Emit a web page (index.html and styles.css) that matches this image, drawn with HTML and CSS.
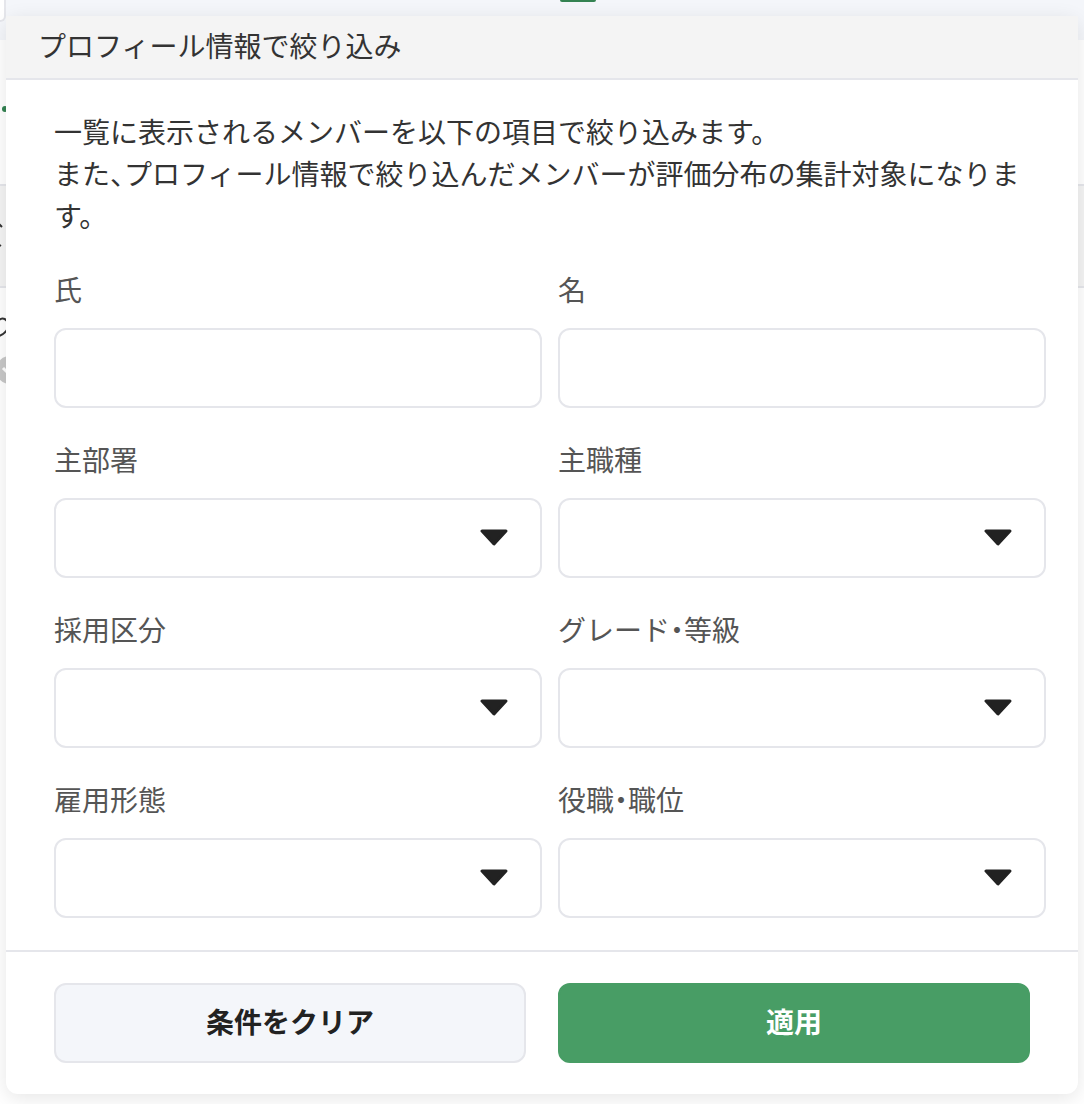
FILE: index.html
```html
<!DOCTYPE html>
<html lang="ja">
<head>
<meta charset="utf-8">
<meta name="viewport" content="width=device-width, initial-scale=1">
<title>プロフィール情報で絞り込み</title>
<link rel="stylesheet" href="styles.css">
</head>
<body>
<div class="stage">
  <div class="page" aria-hidden="true">
    <div class="toolbar"><span class="toolbar-box"></span><span class="toolbar-mark"></span></div>
    <div class="page-summary"><span class="dot"></span></div>
    <div class="page-head"><svg width="6" height="32" viewBox="0 0 6 32"><path d="M-2 3L2 7M-2 24L1 26" fill="none" stroke="#333" stroke-width="2"/></svg></div>
    <div class="page-row">
      <svg width="6" height="24" viewBox="0 0 6 24"><path d="M-1 4C3 1 7 3 8 8C9 13 5 18 -1 20" fill="none" stroke="#333" stroke-width="2"/></svg>
      <svg width="6" height="28" viewBox="0 0 6 28"><circle cx="10" cy="14" r="14" fill="#c8c8c8"/><path d="M3 12L9 18L17 10" fill="none" stroke="#fff" stroke-width="3"/></svg>
    </div>
  </div>

  <form class="dialog" role="dialog" aria-labelledby="dialog-title">
    <h1 class="dialog-title" id="dialog-title">プロフィール情報で絞り込み</h1>
    <div class="dialog-body">
      <p class="lead">一覧に表示されるメンバーを以下の項目で絞り込みます。<br>また、プロフィール情報で絞り込んだメンバーが評価分布の集計対象になります。</p>
      <div class="fields">
        <div class="field"><label for="family">氏</label><input class="control" id="family" type="text"></div>
        <div class="field"><label for="given">名</label><input class="control" id="given" type="text"></div>
        <div class="field"><label for="dept">主部署</label><div class="picker"><select class="control" id="dept"><option></option></select><svg class="arrow" viewBox="0 0 28 18"><path d="M2 2H26L14 15Z"/></svg></div></div>
        <div class="field"><label for="job">主職種</label><div class="picker"><select class="control" id="job"><option></option></select><svg class="arrow" viewBox="0 0 28 18"><path d="M2 2H26L14 15Z"/></svg></div></div>
        <div class="field"><label for="hiring">採用区分</label><div class="picker"><select class="control" id="hiring"><option></option></select><svg class="arrow" viewBox="0 0 28 18"><path d="M2 2H26L14 15Z"/></svg></div></div>
        <div class="field"><label for="grade">グレード・等級</label><div class="picker"><select class="control" id="grade"><option></option></select><svg class="arrow" viewBox="0 0 28 18"><path d="M2 2H26L14 15Z"/></svg></div></div>
        <div class="field"><label for="employment">雇用形態</label><div class="picker"><select class="control" id="employment"><option></option></select><svg class="arrow" viewBox="0 0 28 18"><path d="M2 2H26L14 15Z"/></svg></div></div>
        <div class="field"><label for="position">役職・職位</label><div class="picker"><select class="control" id="position"><option></option></select><svg class="arrow" viewBox="0 0 28 18"><path d="M2 2H26L14 15Z"/></svg></div></div>
      </div>
    </div>
    <div class="dialog-actions">
      <button class="button" type="reset">条件をクリア</button>
      <button class="button button-primary" type="submit">適用</button>
    </div>
  </form>
</div>
</body>
</html>
```
FILE: styles.css
```css
* {
  box-sizing: border-box;
}

body {
  margin: 0;
  background: #fff;
  color: #333;
  font-family: "Noto Sans CJK JP", sans-serif;
  font-size: 28px;
  line-height: 42px;
  font-feature-settings: "halt";
}

/* The page and the dialog share one grid cell, the dialog on top. */
.stage {
  display: grid;
  grid-template-columns: minmax(0, 1fr);
  min-height: 100vh;
  overflow: hidden;
}

.page,
.dialog {
  grid-area: 1 / 1;
}

.page svg {
  display: block;
}

.toolbar {
  display: grid;
  grid-template-columns: 6px 554px 36px;
  height: 40px;
  background: #f4f6fa;
}

.toolbar-box {
  height: 22px;
  border: solid #e5e6eb;
  border-width: 0 2px 2px 0;
  border-bottom-right-radius: 12px;
  background: #fff;
}

.toolbar-mark {
  grid-column: 3;
  height: 2px;
  border-radius: 0 0 2px 2px;
  background: #348352;
}

.page-summary {
  height: 146px;
  padding: 66px 0 0 2px;
  border-bottom: 2px solid #e5e6eb;
}

.dot {
  display: block;
  width: 6px;
  height: 6px;
  border-radius: 50%;
  background: #348352;
}

.page-head {
  height: 102px;
  padding-top: 34px;
  border-bottom: 2px solid #e5e6eb;
  background: #f4f4f4;
}

.page-row {
  display: grid;
  gap: 16px;
  padding-top: 28px;
}

.dialog {
  z-index: 1;
  align-self: start;
  margin: 16px 6px 10px;
  border-radius: 12px;
  background: #fff;
  box-shadow: 0 4px 20px rgba(0, 0, 0, 0.1);
}

.dialog-title {
  margin: 0;
  padding: 8px 32px 12px;
  border-bottom: 2px solid #e5e6eb;
  background: #f4f4f4;
  font-size: 28px;
  font-weight: 400;
}

.dialog-body {
  padding: 30px 32px 32px 48px;
}

.lead {
  margin: 0 0 32px;
}

.fields {
  display: grid;
  grid-template-columns: repeat(2, minmax(0, 1fr));
  gap: 30px 16px;
}

.field {
  display: grid;
  gap: 18px;
  color: #555;
}

.control {
  display: block;
  width: 100%;
  height: 80px;
  margin: 0;
  padding: 0 24px;
  border: 2px solid #e5e6eb;
  border-radius: 12px;
  background: #fff;
  color: #333;
  font: inherit;
  appearance: none;
}

.picker {
  display: grid;
  align-items: center;
}

.picker > * {
  grid-area: 1 / 1;
}

.arrow {
  justify-self: end;
  width: 28px;
  height: 18px;
  margin-right: 34px;
  fill: #222;
  stroke: #222;
  stroke-width: 3;
  stroke-linejoin: round;
  pointer-events: none;
}

.dialog-actions {
  display: grid;
  grid-template-columns: repeat(2, minmax(0, 1fr));
  gap: 32px;
  padding: 31px 48px;
  border-top: 2px solid #e5e6eb;
}

.button {
  height: 80px;
  padding: 0 24px 4px;
  border: 2px solid #e5e6eb;
  border-radius: 12px;
  background: #f4f6fa;
  color: #222;
  font: inherit;
  font-weight: 700;
}

.button-primary {
  border-color: #489d65;
  background: #489d65;
  color: #fff;
}
```
